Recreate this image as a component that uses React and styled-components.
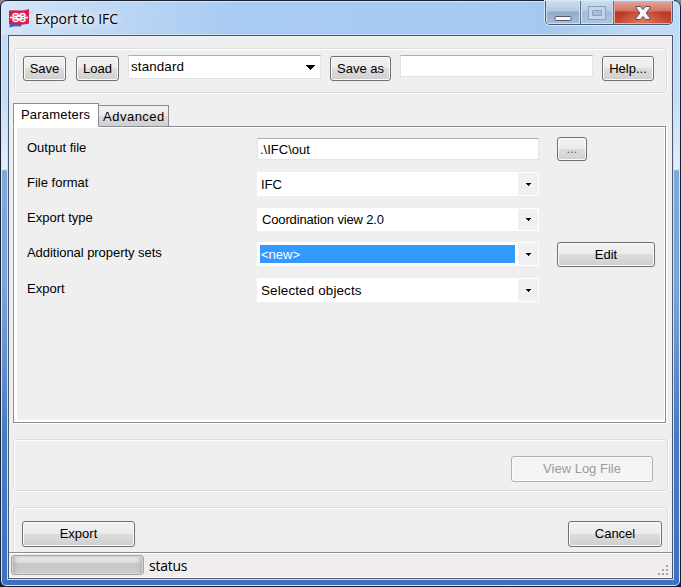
import React from "react";
import styled, { createGlobalStyle, css } from "styled-components";

const GlobalStyle = createGlobalStyle`
  *, *::before, *::after { box-sizing: border-box; }
  html, body { margin: 0; padding: 0; background: #39414c; overflow: hidden; }
`;

const Desktop = styled.div`
  width: 681px;
  height: 587px;
  background: linear-gradient(#8b8f94 0, #39414c 20px, #111c30 100%);
`;

const Window = styled.div`
  display: flex;
  flex-direction: column;
  width: 681px;
  height: 587px;
  padding: 0 6px 6px;
  border: 1px solid #1a2130;
  border-radius: 7px 7px 6px 6px;
  box-shadow: inset 0 0 0 1px #d5e8fa;
  background:
    linear-gradient(100deg, #d4e6f8 0, #bdd7f4 110px, #a9cbf2 230px, #a6caf2 470px, #a5c8ef 540px, #c0dbf6 640px, #bfdaf6 100%) 0 0 / 100% 34px no-repeat,
    linear-gradient(#c0dbf7 0, #c5dcf5 95px, #e3eefa 168px, #7fa9dd 170px, #7aa3da 290px, #4a7cc5 430px, #3f70c1 100%);
  font-family: "Liberation Sans", Arial, sans-serif;
  font-size: 13px;
  color: #000;
`;

const TitleBar = styled.header`
  display: flex;
  justify-content: space-between;
  flex: none;
  height: 33px;
  padding-left: 2px;
`;

const TitleGroup = styled.div`
  display: flex;
  align-items: flex-start;
  padding-top: 7px;
`;

const Title = styled.h1`
  margin: 0 0 0 5px;
  font: 400 14px/22px "Open Sans", "Noto Sans", sans-serif;
  letter-spacing: -0.03px;
  text-shadow: 0 0 8px #fff, 0 0 8px #fff;
`;

const Controls = styled.div`
  display: flex;
  height: 24px;
  margin-right: 1px;
  border: 1px solid #4b5a70;
  border-top: 0;
  border-radius: 0 0 5px 5px;
  box-shadow: 0 0 0 1px #d5e8fa;
  overflow: hidden;
`;

const Control = styled.button`
  display: flex;
  align-items: flex-start;
  justify-content: center;
  width: ${(p) => p.$width}px;
  height: 23px;
  padding: 0;
  border: 0;
  border-left: ${(p) => (p.$divider ? "1px solid #5f7189" : "0")};
  box-shadow: inset 0 0 0 1px ${(p) => (p.$tone === "close" ? "#e9a99f" : "#cfdff0")};
  background: ${(p) => ({
    close: "radial-gradient(ellipse at 50% 100%, #e2795c 0, transparent 60%), linear-gradient(#e2a79c 0, #d17361 10px, #b93522 11px, #c94d32 100%)",
    off: "linear-gradient(#c9dcf0 0, #b6cde7 10px, #a2bddc 11px, #adc8e6 100%)",
    normal: "linear-gradient(#d1deec 0, #b5c8de 10px, #8fa9c8 11px, #a5c0de 100%)",
  })[p.$tone]};
`;

const Client = styled.main`
  display: flex;
  flex-direction: column;
  flex: 1;
  min-height: 0;
  margin: 1px 1px 1px;
  border: 1px solid #49586e;
  box-shadow: 0 0 0 1px #cfe1f5;
  background: #efefef;
`;

const Group = styled.section`
  display: flex;
  flex: none;
  border: 1px solid #d5dfe5;
  border-radius: 3px;
  box-shadow: inset 1px 1px 0 #fff, 0 1px 0 #fff, 1px 0 0 #fff;
`;

const Toolbar = styled(Group)`
  align-items: flex-start;
  height: 45px;
  margin: 12px 5px 0;
  padding: 6px 0 0 8px;
`;

const Button = styled.button`
  flex: none;
  width: ${(p) => p.$width}px;
  height: ${(p) => p.$height || 25}px;
  margin: ${(p) => p.$margin || "0"};
  padding: 0 0 1px;
  border: 1px solid #707070;
  border-radius: 3px;
  box-shadow: inset 0 0 0 1px #fbfbfb;
  background: linear-gradient(#f2f2f2 0, #ebebeb 48%, #dddddd 50%, #cfcfcf 100%);
  color: ${(p) => p.$color || "#000"};
  font: inherit;
  white-space: nowrap;
  &:disabled {
    border-color: #adb2b5;
    background: #f4f4f4;
    color: #9b9b9b;
  }
`;

const fieldEdge = css`
  border: 1px solid #e2e3ea;
  border-top-color: #abadb3;
  border-radius: 1px;
`;

const TextField = styled.input`
  flex: none;
  width: ${(p) => p.$width}px;
  height: ${(p) => p.$height}px;
  margin: ${(p) => p.$margin || "0"};
  padding: 0 2px;
  ${fieldEdge}
  background: #fff;
  font: inherit;
  outline: 0;
`;

const Preset = styled.div`
  display: flex;
  justify-content: space-between;
  flex: none;
  width: 193px;
  height: 24px;
  margin: 0 0 0 9px;
  padding: 0 5px 0 2px;
  ${fieldEdge}
  background: #fff;
  font-size: 13.4px;
  line-height: 22px;
  letter-spacing: 0.12px;
  svg { margin-top: 9px; }
`;

const Tabs = styled.nav`
  display: flex;
  align-items: flex-end;
  flex: none;
  height: 24px;
  margin: 10px 4px -1px;
`;

const Tab = styled.div`
  width: ${(p) => (p.$active ? 86 : 71)}px;
  height: ${(p) => (p.$active ? 24 : 22)}px;
  margin-left: ${(p) => (p.$active ? 0 : -1)}px;
  padding-left: ${(p) => (p.$active ? 7 : 4)}px;
  border: 1px solid #898c95;
  border-bottom-color: ${(p) => (p.$active ? "#fff" : "#898c95")};
  background: ${(p) => (p.$active ? "#fff" : "linear-gradient(#f2f2f2 0, #ebebeb 48%, #dddddd 50%, #cfcfcf 100%)")};
  line-height: ${(p) => (p.$active ? 22 : 21)}px;
  letter-spacing: ${(p) => (p.$active ? 0.2 : 0.5)}px;
  white-space: nowrap;
  z-index: ${(p) => (p.$active ? 1 : 0)};
`;

const Panel = styled.section`
  flex: none;
  width: 653px;
  height: 297px;
  margin-left: 4px;
  padding: 1px 1px 2px 3px;
  border: 1px solid #898c95;
  box-shadow: 1px 1px 0 #fff;
  background: #fff;
`;

const Form = styled.div`
  height: 100%;
  padding: 9px 0 0 10px;
  background: #efefef;
`;

const Row = styled.div`
  display: grid;
  grid-template-columns: 230px 282px auto;
  align-items: start;
  height: ${(p) => p.$height}px;
`;

const Label = styled.label`
  line-height: 17px;
  padding-top: ${(p) => p.$top || 2}px;
  letter-spacing: ${(p) => p.$spacing || 0}px;
`;

const Select = styled.div`
  display: flex;
  width: 282px;
  height: ${(p) => p.$height || 24}px;
  padding: 1px;
  background: #fff;
`;

const SelectValue = styled.span`
  flex: 1;
  height: 18px;
  margin: 2px 3px 0 2px;
  padding-left: ${(p) => p.$indent || 1}px;
  background: ${(p) => (p.$selected ? "#3399ff" : "transparent")};
  color: ${(p) => (p.$selected ? "#fff" : "#000")};
  font-size: ${(p) => p.$size || 13}px;
  line-height: ${(p) => p.$line || 19}px;
  letter-spacing: ${(p) => p.$spacing || 0}px;
`;

const SelectArrow = styled.span`
  display: flex;
  align-items: center;
  justify-content: center;
  width: 20px;
  background: #f0f0f0;
`;

const LogGroup = styled(Group)`
  justify-content: flex-end;
  height: 52px;
  margin: 16px 4px 0;
  padding: 16px 14px 0 0;
`;

const ActionGroup = styled(Group)`
  justify-content: space-between;
  height: 45px;
  margin: 16px 4px 0;
  padding: 13px 5px 0 8px;
  border-bottom: 0;
  border-radius: 3px 3px 0 0;
`;

const StatusBar = styled.footer`
  display: flex;
  flex: 1;
  padding: 2px 2px 0;
  border-top: 1px solid #8c8c8c;
  box-shadow: inset 0 1px 0 #fff, inset 0 -1px 0 #fff;
  background: #f1edec;
`;

const Progress = styled.div`
  width: 133px;
  height: 20px;
  border: 1px solid #a5a5a5;
  border-radius: 3px;
  box-shadow: inset 0 0 0 1px #d6d6d6, inset 4px 0 5px -2px #aaa, inset -4px 0 5px -2px #aaa;
  background: linear-gradient(#eeeeee 0, #dedede 35%, #c7c7c7 42%, #cacaca 75%, #dadada 100%);
`;

const StatusText = styled.span`
  flex: 1;
  margin-left: 5px;
  font: 14px/21px "Open Sans", "Noto Sans", sans-serif;
  letter-spacing: -0.25px;
`;

const Grip = styled.svg`
  align-self: flex-end;
  margin: 0 0 1px;
`;

const AppIcon = () => (
  <svg width="21" height="20" viewBox="0 0 21 20">
    <path d="M0.500 15H13l-1 3.500q-6-1-11.500 1z" fill="#3167b5" />
    <path d="M0 2.500q5-.5 10 0t10-1.500v14.500q-5 1.500-10 1T0 16z" fill="#d91e4d" />
    <path d="M4 5.500h12l2.500 4-2.500 3.500H4L1.500 9.500z" fill="#e0436a" />
    <g fill="none" stroke="#fff" strokeWidth="1.300">
      <ellipse cx="6.500" cy="7" rx="2.600" ry="1.500" />
      <ellipse cx="13.500" cy="7" rx="2.600" ry="1.500" />
      <ellipse cx="10" cy="9.500" rx="2.800" ry="1.500" />
      <ellipse cx="6.500" cy="12" rx="2.600" ry="1.500" />
      <ellipse cx="13.500" cy="12" rx="2.600" ry="1.500" />
      <path d="M1 9.500h4M15 9.500h4" />
    </g>
  </svg>
);

const SmallArrow = () => (
  <svg width="5" height="3" shapeRendering="crispEdges"><path d="M0 0h5v1H4v1H3v1H2V2H1V1H0z" /></svg>
);

const Dropdown = ({ children, height, selected, indent, spacing, line, size }) => (
  <Select $height={height}>
    <SelectValue $selected={selected} $indent={indent} $spacing={spacing} $line={line} $size={size}>{children}</SelectValue>
    <SelectArrow><SmallArrow /></SelectArrow>
  </Select>
);

export default function App() {
  return (
    <Desktop>
      <GlobalStyle />
      <Window>
        <TitleBar>
          <TitleGroup>
            <AppIcon />
            <Title>Export to IFC</Title>
          </TitleGroup>
          <Controls>
            <Control $width={34} $tone="normal" aria-label="Minimize">
              <svg width="18" height="23"><rect x="1" y="15.500" width="16" height="4" rx="1" fill="#f8f8f8" stroke="#535a68" /></svg>
            </Control>
            <Control $width={33} $tone="off" $divider aria-label="Maximize">
              <svg width="18" height="23"><path d="M.5 5.500h17v13H.5zM4.500 9.500h9v5h-9z" fill="#c5d5e6" fillRule="evenodd" stroke="#8c9fb8" /></svg>
            </Control>
            <Control $width={59} $tone="close" $divider aria-label="Close">
              <svg width="18" height="23"><path d="M2 5.500h4.500L9 8.500l2.500-3H16V7l-3.800 5 3.800 5v1.500h-4.500L9 15.500l-2.500 3H2V17l3.800-5L2 7z" fill="#f4f4f4" stroke="#4e5262" strokeLinejoin="round" /></svg>
            </Control>
          </Controls>
        </TitleBar>
        <Client>
          <Toolbar>
            <Button $width={43} $margin="1px 0 0">Save</Button>
            <Button $width={43} $margin="1px 0 0 10px">Load</Button>
            <Preset>
              standard
              <svg width="9" height="5" shapeRendering="crispEdges"><path d="M0 0h9v1H8v1H7v1H6v1H5v1H4V4H3V3H2V2H1V1H0z" /></svg>
            </Preset>
            <Button $width={61} $margin="1px 0 0 9px">Save as</Button>
            <TextField $width={193} $height={22} $margin="0 0 0 9px" aria-label="Save as name" />
            <Button $width={52} $margin="1px 0 0 9px">Help...</Button>
          </Toolbar>
          <Tabs>
            <Tab $active>Parameters</Tab>
            <Tab>Advanced</Tab>
          </Tabs>
          <Panel>
            <Form>
              <Row $height={35}>
                <Label>Output file</Label>
                <TextField $width={282} $height={22} $margin="1px 0 0" defaultValue=".\IFC\out" />
                <Button $width={30} $height={24} $margin="0 0 0 18px" $color="#8a5a2c">...</Button>
              </Row>
              <Row $height={36}>
                <Label>File format</Label>
                <Dropdown>IFC</Dropdown>
              </Row>
              <Row $height={34}>
                <Label $top={1}>Export type</Label>
                <Dropdown height={23} indent={2} spacing={-0.15} line={18}>Coordination view 2.0</Dropdown>
              </Row>
              <Row $height={36}>
                <Label $spacing={-0.05}>Additional property sets</Label>
                <Dropdown selected>{"<new>"}</Dropdown>
                <Button $width={98} $margin="0 0 0 18px">Edit</Button>
              </Row>
              <Row $height={24}>
                <Label>Export</Label>
                <Dropdown spacing={0.15} size={13.4}>Selected objects</Dropdown>
              </Row>
            </Form>
          </Panel>
          <LogGroup>
            <Button $width={142} $height={26} disabled>View Log File</Button>
          </LogGroup>
          <ActionGroup>
            <Button $width={113} $height={26}>Export</Button>
            <Button $width={94} $height={26}>Cancel</Button>
          </ActionGroup>
          <StatusBar>
            <Progress />
            <StatusText>status</StatusText>
            <Grip width="12" height="12" shapeRendering="crispEdges">
              <path d="M8 0h2v2H8zM4 4h2v2H4zM8 4h2v2H8zM0 8h2v2H0zM4 8h2v2H4zM8 8h2v2H8z" fill="#a6a4a3" />
            </Grip>
          </StatusBar>
        </Client>
      </Window>
    </Desktop>
  );
}
